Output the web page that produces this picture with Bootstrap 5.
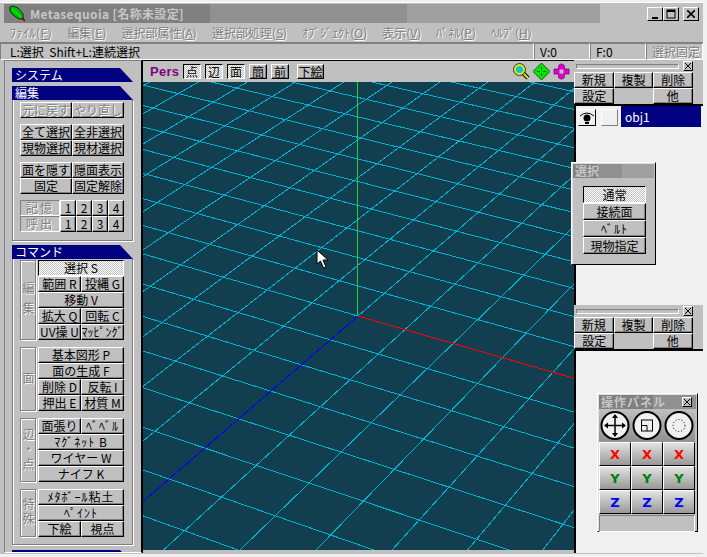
<!DOCTYPE html>
<html lang="ja">
<head>
<meta charset="UTF-8">
<title>Metasequoia</title>
<link rel="stylesheet" href="https://cdn.jsdelivr.net/npm/bootstrap@5.3.0/dist/css/bootstrap.min.css">
<style>
html, body { height: 100%; overflow: hidden; }
body { background: #f0f0f0; font-family: "Noto Sans CJK JP", "Liberation Sans", sans-serif; font-size: 12px; line-height: 1; color: #000; }
.win { width: 703px; height: 552px; margin-top: 2px; background: #c0c0c0; border-top: 1px solid #fff; position: relative; }
.titlebar { height: 19px; margin: 1px 4px 0 4px; background: #c0c0c0; }
.band { height: 100%; }
.b1 { width: 206px; background: #808080; }
.b2 { width: 197px; background: #909090; }
.b3 { width: 193px; background: #a0a0a0; }
.title-text { color: #c6c6c6; font-weight: 700; font-size: 12px; letter-spacing: .35px; white-space: nowrap; }
.wbtn-sm { width: 16px; height: 14px; background: #c0c0c0; border: 1px solid; border-color: #fff #000 #000 #fff; }
.menu { height: 19px; padding-left: 10px; gap: 15px; color: #808080; text-shadow: 1px 1px 0 #fff; }
.menu span:first-child { letter-spacing: .5px; }
.menu u { text-underline-offset: 1px; }
.hint { height: 18px; border-top: 1px solid #808080; box-shadow: inset 0 1px 0 #fff; }
.hint > div { border: 1px solid; border-color: #808080 #fff #fff #808080; display: flex; align-items: center; padding-left: 5px; }
.hint > div:first-child { padding-left: 9px; }
.off { color: #808080; text-shadow: 1px 1px 0 #fff; }
.main { height: 493px; }
.left { width: 138px; margin-left: 4px; border: 1px solid; border-color: #808080 #000 #fff #808080; padding: 7px 7px 0 7px; overflow: hidden; }
.sec { height: 14px; width: 121px; flex: none; background: #000080; color: #fff; padding-left: 3px; clip-path: polygon(0 0, 108px 0, 100% 100%, 0 100%); white-space: nowrap; display: flex; align-items: center; }
.frame { width: 121px; border: 1px solid #808080; border-top: 0; box-shadow: 1px 1px 0 #fff, inset 1px 0 0 #fff; padding: 2px 8px 0 7px; }
.frame.cmdf { padding-top: 1px; margin-bottom: 5px; }
.gapb { margin-bottom: 6px; }
.btn.w { --bs-btn-padding-x: 0; --bs-btn-padding-y: 0; --bs-btn-font-size: 12px; --bs-btn-border-radius: 0; --bs-btn-color: #000; --bs-btn-line-height: 1; --bs-btn-border-width: 0; height: 16px; background: #c0c0c0; color: #000; border: 1px solid; border-color: #fff #000 #000 #fff; box-shadow: inset -1px -1px 0 #808080; white-space: nowrap; display: flex; align-items: center; justify-content: center; overflow: hidden; }
.btn.w.dis { color: #808080; text-shadow: 1px 1px 0 #fff; }
.btn.w.on { border-color: #000 #fff #fff #000; box-shadow: none; background: repeating-conic-gradient(#fff 0 25%, #c0c0c0 0 50%) 0 0 / 2px 2px; }
.btn.w.hw { letter-spacing: 1px; }
.f1 { flex: 1 1 0; min-width: 0; }
.lab { width: 40px; height: 16px; border: 1px solid; border-color: #808080 #fff #fff #808080; display: flex; align-items: center; justify-content: center; letter-spacing: 2px; }
.cmd { margin-bottom: 7px; }
.side { width: 16px; margin-right: 2px; border: 1px solid #808080; box-shadow: inset 1px 1px 0 #fff, 1px 1px 0 #fff; color: #808080; text-shadow: 1px 1px 0 #fff; writing-mode: vertical-rl; letter-spacing: 3px; display: flex; align-items: center; justify-content: center; }
.view { width: 432px; border-top: 1px solid #000; border-left: 1px solid #000; position: relative; }
.vbar { height: 21px; padding-left: 7px; }
.vbar .btn.w { width: 18px; height: 15px; }
.pers { color: #800080; font-family: "Liberation Sans", sans-serif; font-weight: 700; font-size: 13px; width: 29px; letter-spacing: .3px; }
.ticons { gap: 3px; margin-right: 4px; }
.canvas { background: #123f50; display: block; }
.right { width: 129px; }
.grip { height: 12px; padding: 0 2px; }
.grip i { flex: 1; height: 5px; border: 1px solid; border-color: #808080 #fff #fff #808080; display: block; }
.xbtn { width: 10px; height: 10px; background: #c0c0c0; border: 1px solid; border-color: #fff #000 #000 #fff; display: flex; }
.rows { width: 119px; }
.rows .btn.w { flex: 1 1 0; }
.list { background: #f0f0f0; border-top: 2px solid #000; border-left: 2px solid #000; position: relative; }
.list.top { height: 201px; flex: none; }
.eye { width: 18px; height: 17px; margin: 3px 5px 0 2px; background: #f0f0f0; border: 1px solid; border-color: #fff #000 #000 #fff; display: flex; align-items: center; justify-content: center; }
.swatch { width: 17px; height: 17px; margin-top: 3px; background: #f0f0f0; border: 1px solid; border-color: #fff #808080 #808080 #fff; }
.obj { width: 80px; height: 21px; margin-left: 3px; background: #000080; color: #fff; padding-left: 4px; display: flex; align-items: center; }
.float { position: absolute; background: #c0c0c0; border: 1px solid; border-color: #fff #000 #000 #fff; box-shadow: inset 1px 1px 0 #dfdfdf; padding: 1px; }
.ftitle { height: 14px; color: #c6c6c6; font-weight: 700; background: linear-gradient(90deg, #808080 0 30%, #909090 30% 60%, #a0a0a0 60% 100%); padding-left: 2px; white-space: nowrap; }
.sel { left: 571px; top: 159px; width: 85px; height: 103px; }
.sel .btn.w { width: 63px; height: 17px; margin-left: 10px; }
.ops { left: 597px; top: 390px; width: 101px; height: 139px; }
.ops .ftitle { background: linear-gradient(90deg, #808080 0 56%, #909090 56% 100%); letter-spacing: 1px; }
.rings { display: grid; grid-template-columns: repeat(3, 1fr); height: 33px; width: 96px; background: linear-gradient(#c0c0c0, #909090); }
.opgrid { display: grid; grid-template-columns: repeat(3, 1fr); width: 96px; }
.opgrid .btn.w { height: 24px; font-family: "DejaVu Sans", sans-serif; font-weight: 700; font-size: 13px; border-color: #fff #000 #000 #fff; background: linear-gradient(#e2e2e2, #989898); box-shadow: none; }
.tx { color: #f00 !important; } .ty { color: #008000 !important; } .tz { color: #00f !important; }
.opfoot { height: 17px; width: 96px; border: 1px solid; border-color: #808080 #fff #fff #808080; margin-top: 1px; }
.cursor { position: absolute; left: 173px; top: 188px; }
</style>
</head>
<body>
<div class="win">
  <div class="titlebar d-flex align-items-center position-relative">
    <div class="band b1 d-flex align-items-center">
      <svg width="18" height="17" viewBox="0 0 18 17" class="ms-1"><path d="M2 2 L5 1 L10 3 L15 9 L15 14 L11 14 L5 10 L2 6 Z" fill="#00c000" stroke="#003000"/><path d="M4 4 L13 12" stroke="#00ff40"/><path d="M14 13 L17 16" stroke="#900000" stroke-width="1.500"/></svg>
      <span class="title-text ms-1">Metasequoia [名称未設定]</span>
    </div>
    <div class="band b2"></div>
    <div class="band b3"></div>
    <div class="ms-auto d-flex">
      <div class="wbtn-sm d-flex align-items-end justify-content-center"><svg width="8" height="10"><rect x="1" y="7" width="6" height="2"/></svg></div>
      <div class="wbtn-sm d-flex align-items-center justify-content-center"><svg width="10" height="10"><rect x="1" y="1" width="8" height="8" fill="none" stroke="#000"/><rect x="1" y="1" width="8" height="2"/></svg></div>
      <div class="wbtn-sm ms-1 d-flex align-items-center justify-content-center"><svg width="8" height="8"><path d="M0 0 L8 8 M8 0 L0 8" stroke="#000" stroke-width="1.6"/></svg></div>
    </div>
  </div>
  <div class="menu d-flex align-items-center">
    <span>ﾌｧｲﾙ(<u>F</u>)</span><span>編集(<u>E</u>)</span><span>選択部属性(<u>A</u>)</span><span>選択部処理(<u>S</u>)</span><span>ｵﾌﾞｼﾞｪｸﾄ(<u>O</u>)</span><span>表示(<u>V</u>)</span><span>ﾊﾟﾈﾙ(<u>P</u>)</span><span>ﾍﾙﾌﾟ(<u>H</u>)</span>
  </div>
  <div class="hint d-flex">
    <div class="flex-grow-1">L:選択&nbsp; Shift+L:連続選択</div>
    <div style="width:56px">V:0</div>
    <div style="width:56px">F:0</div>
    <div class="off" style="width:57px">選択固定</div>
  </div>
  <div class="main d-flex">
    <div class="left">
      <div class="sec mb-1">システム</div>
      <div class="sec">編集</div>
      <div class="frame pb-2 mb-1">
        <div class="d-flex gapb"><button class="btn w dis f1">元に戻す</button><button class="btn w dis f1">やり直し</button></div>
        <div class="d-flex"><button class="btn w f1">全て選択</button><button class="btn w f1">全非選択</button></div>
        <div class="d-flex gapb"><button class="btn w f1">現物選択</button><button class="btn w f1">現材選択</button></div>
        <div class="d-flex"><button class="btn w f1">面を隠す</button><button class="btn w f1">隠面表示</button></div>
        <div class="d-flex gapb"><button class="btn w f1">固定</button><button class="btn w f1">固定解除</button></div>
        <div class="d-flex"><div class="lab off">記憶</div><button class="btn w f1">1</button><button class="btn w f1">2</button><button class="btn w f1">3</button><button class="btn w f1">4</button></div>
        <div class="d-flex"><div class="lab off">呼出</div><button class="btn w f1">1</button><button class="btn w f1">2</button><button class="btn w f1">3</button><button class="btn w f1">4</button></div>
      </div>
      <div class="sec">コマンド</div>
      <div class="frame cmdf">
        <div class="d-flex cmd">
          <div class="side">編 集</div>
          <div class="flex-grow-1">
            <button class="btn w on w-100">選択 S</button>
            <div class="d-flex"><button class="btn w f1">範囲 R</button><button class="btn w f1">投縄 G</button></div>
            <button class="btn w w-100">移動 V</button>
            <div class="d-flex"><button class="btn w f1">拡大 Q</button><button class="btn w f1">回転 C</button></div>
            <div class="d-flex"><button class="btn w f1">UV操 U</button><button class="btn w f1">ﾏｯﾋﾟﾝｸﾞ</button></div>
          </div>
        </div>
        <div class="d-flex cmd">
          <div class="side">面</div>
          <div class="flex-grow-1">
            <button class="btn w w-100">基本図形 P</button>
            <button class="btn w w-100">面の生成 F</button>
            <div class="d-flex"><button class="btn w f1">削除 D</button><button class="btn w f1">反転 I</button></div>
            <div class="d-flex"><button class="btn w f1">押出 E</button><button class="btn w f1">材質 M</button></div>
          </div>
        </div>
        <div class="d-flex cmd">
          <div class="side">辺・点</div>
          <div class="flex-grow-1">
            <div class="d-flex"><button class="btn w f1">面張り</button><button class="btn w hw f1">ﾍﾞﾍﾞﾙ</button></div>
            <button class="btn w hw w-100">ﾏｸﾞﾈｯﾄ B</button>
            <button class="btn w w-100">ワイヤー W</button>
            <button class="btn w w-100">ナイフ K</button>
          </div>
        </div>
        <div class="d-flex cmd">
          <div class="side">特殊</div>
          <div class="flex-grow-1">
            <button class="btn w hw w-100">ﾒﾀﾎﾞｰﾙ粘土</button>
            <button class="btn w hw w-100">ﾍﾟｲﾝﾄ</button>
            <div class="d-flex"><button class="btn w f1">下絵</button><button class="btn w f1">視点</button></div>
          </div>
        </div>
      </div>
      <div class="sec"></div>
    </div>

    <div class="view">
      <div class="vbar d-flex align-items-center gap-1">
        <span class="pers">Pers</span>
        <button class="btn w on">点</button><button class="btn w on">辺</button><button class="btn w on">面</button>
        <button class="btn w">簡</button><button class="btn w">前</button><button class="btn w ms-1" style="width:27px">下絵</button>
        <div class="ms-auto d-flex ticons">
          <svg width="17" height="17" viewBox="0 0 17 17"><path d="M10 10 L15 15" stroke="#000" stroke-width="4"/><path d="M10 10 L15 15" stroke="#e8e800" stroke-width="2"/><circle cx="6.5" cy="6.5" r="4.6" fill="#00c8e8" stroke="#e8e800" stroke-width="2"/><circle cx="6.5" cy="6.5" r="6" fill="none" stroke="#000" stroke-width=".7"/></svg>
          <svg width="17" height="17" viewBox="0 0 17 17"><path d="M8.5 0 L17 8.5 L8.5 17 L0 8.5 Z" fill="#00e800" stroke="#004000" stroke-width=".8"/><path d="M8.5 4 V13 M4 8.5 H13" stroke="#006000" stroke-width="1"/><rect x="7" y="7" width="3" height="3" fill="#00e800"/></svg>
          <svg width="17" height="17" viewBox="0 0 17 17"><path d="M8.5 1 C12 1 12 5 11 6 L16 6 L16 11 L11 11 C12 13 12 16 8.5 16 C5 16 5 13 6 11 L1 11 L1 6 L6 6 C5 5 5 1 8.5 1 Z" fill="#e000d0" stroke="#600060" stroke-width=".7"/><rect x="6.5" y="6.5" width="4" height="4" fill="#c0c0c0"/></svg>
        </div>
      </div>
      <svg id="grid" class="canvas" width="431" height="468" viewBox="143 82 431 468" shape-rendering="crispEdges"></svg>
      <svg class="cursor" width="14" height="22" viewBox="0 0 14 22"><path d="M1 1 L1 15 L4.5 12 L7.5 19 L10 18 L7 11 L12 11 Z" fill="#fff" stroke="#000"/></svg>
    </div>

    <div class="right d-flex flex-column">
      <div class="grip d-flex align-items-center"><i></i><div class="xbtn ms-1 me-2"><svg width="8" height="8"><path d="M1 1 L7 7 M7 1 L1 7" stroke="#000"/></svg></div></div>
      <div class="rows">
        <div class="d-flex"><button class="btn w">新規</button><button class="btn w">複製</button><button class="btn w">削除</button></div>
        <div class="d-flex"><button class="btn w">設定</button><span class="f1"></span><button class="btn w">他</button></div>
      </div>
      <div class="list top d-flex align-items-start">
        <div class="eye"><svg width="14" height="12" viewBox="0 0 14 12"><path d="M0 4 Q7 -2 14 4" fill="none" stroke="#000"/><circle cx="7" cy="6" r="3.5"/><path d="M5 10 H9 V12 H5 Z"/></svg></div>
        <div class="swatch"></div>
        <div class="obj">obj1</div>
      </div>
      <div class="grip d-flex align-items-center"><i></i><div class="xbtn ms-1 me-2"><svg width="8" height="8"><path d="M1 1 L7 7 M7 1 L1 7" stroke="#000"/></svg></div></div>
      <div class="rows">
        <div class="d-flex"><button class="btn w">新規</button><button class="btn w">複製</button><button class="btn w">削除</button></div>
        <div class="d-flex"><button class="btn w">設定</button><span class="f1"></span><button class="btn w">他</button></div>
      </div>
      <div class="list flex-grow-1"></div>
    </div>
  </div>

  <div class="float sel">
    <div class="ftitle d-flex align-items-center">選択</div>
    <div class="mt-2"></div>
    <button class="btn w on">通常</button>
    <button class="btn w">接続面</button>
    <button class="btn w hw">ﾍﾞﾙﾄ</button>
    <button class="btn w">現物指定</button>
  </div>

  <div class="float ops">
    <div class="ftitle d-flex align-items-center">操作パネル<div class="xbtn ms-auto me-1"><svg width="8" height="8"><path d="M1 1 L7 7 M7 1 L1 7" stroke="#000"/></svg></div></div>
    <div class="rings">
      <svg width="32" height="33" viewBox="0 0 32 33"><circle cx="16" cy="16.5" r="13.5" fill="#f0f0f0" stroke="#000" stroke-width="2"/><path d="M16 7 V26 M6.500 16.500 H25.500" stroke="#000" stroke-width="1.500"/><path d="M16 5 L19 9 H13 Z M16 28 L19 24 H13 Z M5 16.500 L9 13.500 V19.500 Z M27 16.500 L23 13.500 V19.500 Z"/></svg>
      <svg width="32" height="33" viewBox="0 0 32 33"><circle cx="16" cy="16.5" r="13.5" fill="#f0f0f0" stroke="#000" stroke-width="2"/><rect x="10.500" y="11" width="11" height="11" fill="none" stroke="#000"/><path d="M10.500 16.500 H16 V22" fill="none" stroke="#000"/></svg>
      <svg width="32" height="33" viewBox="0 0 32 33"><circle cx="16" cy="16.5" r="13.5" fill="#f0f0f0" stroke="#000" stroke-width="2"/><circle cx="16" cy="16.5" r="6" fill="none" stroke="#000" stroke-dasharray="1 2"/></svg>
    </div>
    <div class="opgrid">
      <button class="btn w tx">X</button><button class="btn w tx">X</button><button class="btn w tx">X</button>
      <button class="btn w ty">Y</button><button class="btn w ty">Y</button><button class="btn w ty">Y</button>
      <button class="btn w tz">Z</button><button class="btn w tz">Z</button><button class="btn w tz">Z</button>
    </div>
    <div class="opfoot"></div>
  </div>
</div>

<script>
// ground grid: perspective map of (i, j) to screen, fitted to the axis crossings
function pt(i, j) {
  var w = 1 - 0.0118 * i - 0.024 * j;
  return [358 + (46.44 * i - 26.96 * j) / w, 316 + (13.4 * i + 23.25 * j) / w];
}
var svg = document.getElementById('grid'), html = '';
function seg(a, b, col) {
  html += '<line x1="' + a[0] + '" y1="' + a[1] + '" x2="' + b[0] + '" y2="' + b[1] + '" stroke="' + col + '"/>';
}
for (var n = -20; n <= 20; n++) {
  seg(pt(n, -20), pt(n, 20), '#00b0d0');
  seg(pt(-20, n), pt(20, n), '#00b0d0');
}
seg(pt(0, 0), pt(20, 0), '#f00');
seg(pt(0, 0), pt(0, 20), '#00f');
seg([357.5, 316], [357.5, 82], '#20d040');
svg.innerHTML = html;
</script>
<script src="https://cdn.jsdelivr.net/npm/bootstrap@5.3.0/dist/js/bootstrap.bundle.min.js"></script>
</body>
</html>
